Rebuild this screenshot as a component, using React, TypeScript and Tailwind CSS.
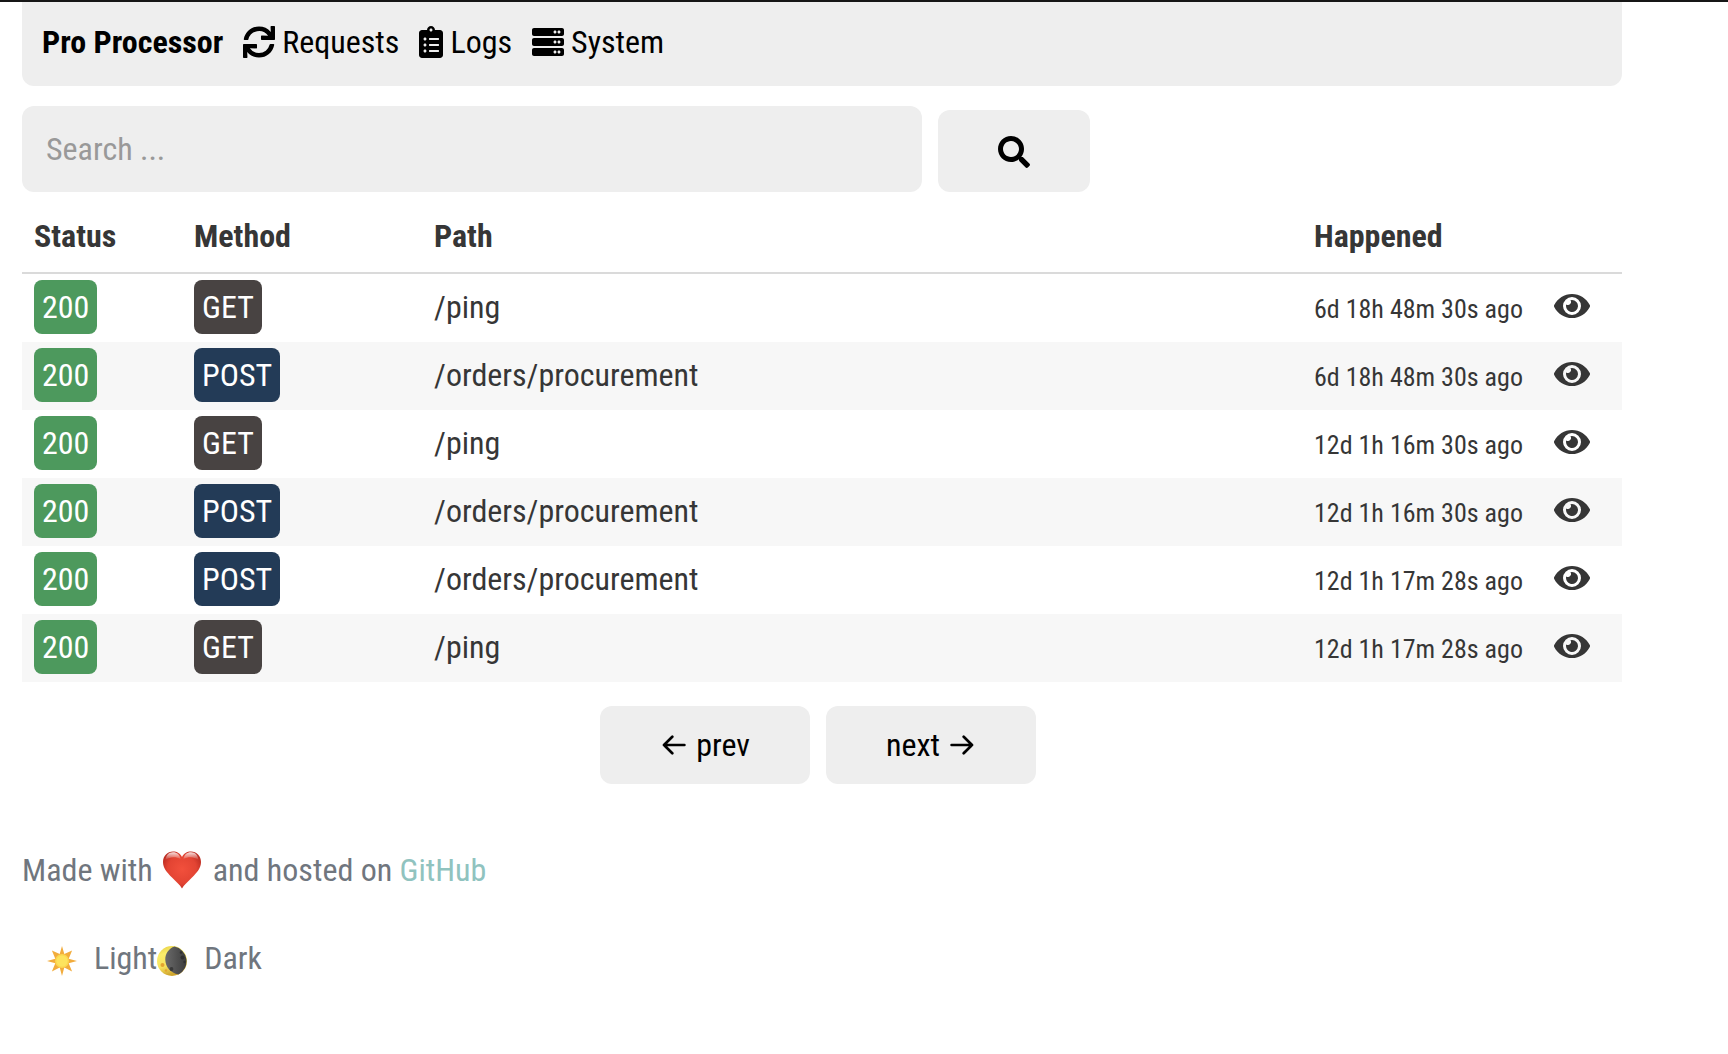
import React from "react";
import { FaClipboardList, FaEye, FaSearch, FaServer, FaSync } from "react-icons/fa";

type Entry = { status: number; method: "GET" | "POST"; path: string; happened: string };

const entries: Entry[] = [
  { status: 200, method: "GET", path: "/ping", happened: "6d 18h 48m 30s ago" },
  { status: 200, method: "POST", path: "/orders/procurement", happened: "6d 18h 48m 30s ago" },
  { status: 200, method: "GET", path: "/ping", happened: "12d 1h 16m 30s ago" },
  { status: 200, method: "POST", path: "/orders/procurement", happened: "12d 1h 16m 30s ago" },
  { status: 200, method: "POST", path: "/orders/procurement", happened: "12d 1h 17m 28s ago" },
  { status: 200, method: "GET", path: "/ping", happened: "12d 1h 17m 28s ago" },
];

const methodColor = { GET: "bg-[#484342]", POST: "bg-[#233b57]" };

function Arrow({ flip = false }: { flip?: boolean }) {
  return (
    <svg viewBox="0 0 24 20" className="h-5 w-6" fill="none" stroke="currentColor" strokeWidth="2.7" strokeLinecap="round" strokeLinejoin="round" aria-hidden="true">
      {flip ? <path d="M1.6 10H22M13.7 1.8 22 10l-8.3 8.2" /> : <path d="M22.4 10H2M10.3 1.8 2 10l8.3 8.2" />}
    </svg>
  );
}

function Heart() {
  return (
    <svg viewBox="0 0 38 38" className="h-[38px] w-[38px]" aria-hidden="true">
      <defs>
        <radialGradient id="heartFill" cx="50%" cy="48%" r="58%">
          <stop offset="0" stopColor="#f2503c" />
          <stop offset="0.65" stopColor="#e34433" />
          <stop offset="1" stopColor="#b82a20" />
        </radialGradient>
        <linearGradient id="heartShine" x1="0" y1="0" x2="0" y2="1">
          <stop offset="0" stopColor="#fff" stopOpacity="0.85" />
          <stop offset="1" stopColor="#fff" stopOpacity="0" />
        </linearGradient>
      </defs>
      <path fill="url(#heartFill)" d="M19 37.5C17 34 13 30.500 9 26.500 4 21.500 0 17 0 11 0 5 4.500.5 10 .5c4 0 7.500 2 9 5.500C20.500 2.500 24 .5 28 .5 33.500.5 38 5 38 11c0 6-4 10.500-9 15.500-4 4-8 7.500-10 11Z" />
      <path fill="url(#heartShine)" d="M2.500 9C3 4 6 1.300 10 1.300S17 4 17.500 8C13 5.500 7 5.500 2.500 9ZM35.500 9C35 4 32 1.300 28 1.300S21 4 20.500 8c4.500-2.500 10.500-2.500 15 1Z" />
    </svg>
  );
}

function Sun() {
  return (
    <svg viewBox="0 0 30 30" className="h-[30px] w-[30px]" aria-hidden="true">
      <path fill="#f2ac3c" d="M15 0l2.300 8 7.800-3.600L21.700 12.700 30 15l-8.300 2.300 3.400 8.300-7.800-4L15 30l-2.300-8.400-7.800 4 3.400-8.300L0 15l8.300-2.300L4.900 4.400 12.700 8Z" />
      <circle cx="15" cy="15" r="7" fill="#fbd650" />
      <circle cx="15" cy="15" r="5.500" fill="#fde35d" />
    </svg>
  );
}

function Moon() {
  return (
    <svg viewBox="0 0 30 30" className="h-[30px] w-[30px]" aria-hidden="true">
      <defs>
        <linearGradient id="moonLit" x1="0" y1="0" x2="0.3" y2="1">
          <stop offset="0" stopColor="#e3c93c" />
          <stop offset="0.3" stopColor="#fbee6b" />
          <stop offset="0.7" stopColor="#f6e25c" />
          <stop offset="1" stopColor="#cfa52e" />
        </linearGradient>
        <linearGradient id="moonDark" x1="0" y1="0" x2="1" y2="0">
          <stop offset="0" stopColor="#6a6a6a" />
          <stop offset="1" stopColor="#3c3c3c" />
        </linearGradient>
      </defs>
      <circle cx="15" cy="15" r="15" fill="url(#moonLit)" />
      <path fill="url(#moonDark)" d="M17.500.5C11.500 2.500 8 8 8.300 14c.3 7 5.200 13 13.200 14.500A15 15 0 0 0 17.500.5Z" />
      <circle cx="5.500" cy="19" r="2" fill="#e3a52f" />
      <circle cx="9" cy="24.500" r="1.200" fill="#e3a52f" />
      <circle cx="14.500" cy="23" r="1.900" fill="#393939" />
      <circle cx="25.500" cy="11.500" r="2" fill="#2f2f2f" />
      <circle cx="24" cy="6.500" r="1.200" fill="#2f2f2f" />
      <circle cx="27.500" cy="16" r="1.200" fill="#2f2f2f" />
    </svg>
  );
}

export default function App() {
  return (
    <div className="min-h-screen border-t-2 border-[#161616] bg-white font-['Roboto_Condensed',Roboto,sans-serif] text-[32px] leading-[48px] text-[#363636]">
      <div className="mx-[22px] max-w-[1600px]">
        <nav className="flex h-[84px] items-start gap-5 rounded-b-xl bg-[#eee] px-5 pt-4 text-black">
          <a href="#home" className="font-bold">Pro Processor</a>
          <a href="#requests" className="flex items-center gap-[7px]"><FaSync />Requests</a>
          <a href="#logs" className="flex items-center gap-[7px]"><FaClipboardList className="w-6" />Logs</a>
          <a href="#system" className="flex items-center gap-[7px]"><FaServer />System</a>
        </nav>

        <form className="mt-5 flex items-end gap-4" onSubmit={(e) => e.preventDefault()}>
          <input type="search" aria-label="Search" placeholder="Search ..." className="h-[86px] w-[900px] rounded-xl bg-[#eee] px-6 outline-none placeholder:text-[#999]" />
          <button type="submit" aria-label="Search" className="flex h-[82px] w-[152px] items-center justify-center rounded-xl bg-[#eee] pt-0.5 text-black">
            <FaSearch />
          </button>
        </form>

        <table className="w-full table-fixed border-separate border-spacing-0 text-left">
          <colgroup>
            <col className="w-[10%]" />
            <col className="w-[15%]" />
            <col className="w-[55%]" />
            <col className="w-[15%]" />
            <col className="w-[5%]" />
          </colgroup>
          <thead>
            <tr className="h-[82px]">
              <th className="border-b-2 border-[#dadada] px-3 pt-2">Status</th>
              <th className="border-b-2 border-[#dadada] px-3 pt-2">Method</th>
              <th className="border-b-2 border-[#dadada] px-3 pt-2">Path</th>
              <th className="border-b-2 border-[#dadada] px-3 pt-2">Happened</th>
              <td className="border-b-2 border-[#dadada]" />
            </tr>
          </thead>
          <tbody>
            {entries.map((entry, i) => (
              <tr key={i} className="h-[68px] even:bg-[#f7f7f7]">
                <td className="px-3">
                  <span className="mb-0.5 flex h-[54px] w-fit items-center rounded-lg bg-[#4d995d] px-2 text-white">{entry.status}</span>
                </td>
                <td className="px-3">
                  <span className={`mb-0.5 flex h-[54px] w-fit items-center rounded-lg px-2 text-white ${methodColor[entry.method]}`}>{entry.method}</span>
                </td>
                <td className="px-3 pb-0.5">{entry.path}</td>
                <td className="whitespace-nowrap px-3 pt-0.5 text-[26px]">{entry.happened}</td>
                <td className="px-3">
                  <a href="#details" aria-label="View request" className="block w-fit pb-1"><FaEye className="h-8 w-9" /></a>
                </td>
              </tr>
            ))}
          </tbody>
        </table>

        <div className="mt-6 flex justify-center gap-4 pr-2 text-black">
          <button type="button" className="flex h-[78px] w-[210px] items-center justify-center gap-2.5 rounded-xl bg-[#eee] pl-0.5"><Arrow />prev</button>
          <button type="button" className="flex h-[78px] w-[210px] items-center justify-center gap-2.5 rounded-xl bg-[#eee] pr-0.5"><span>next</span><Arrow flip /></button>
        </div>

        <footer className="mt-[62px] text-[#70767e]">
          <p className="flex items-center">
            Made with<span className="ml-2.5 mr-3"><Heart /></span>and hosted on&nbsp;<a href="#github" className="text-[#90c3bf]">GitHub</a>
          </p>
          <div className="mt-10 flex pl-[25px]">
            <button type="button" className="flex items-center gap-[17px]"><span className="pt-1.5"><Sun /></span>Light</button>
            <button type="button" className="flex items-center gap-[17px]"><span className="pt-1.5"><Moon /></span>Dark</button>
          </div>
        </footer>
      </div>
    </div>
  );
}
